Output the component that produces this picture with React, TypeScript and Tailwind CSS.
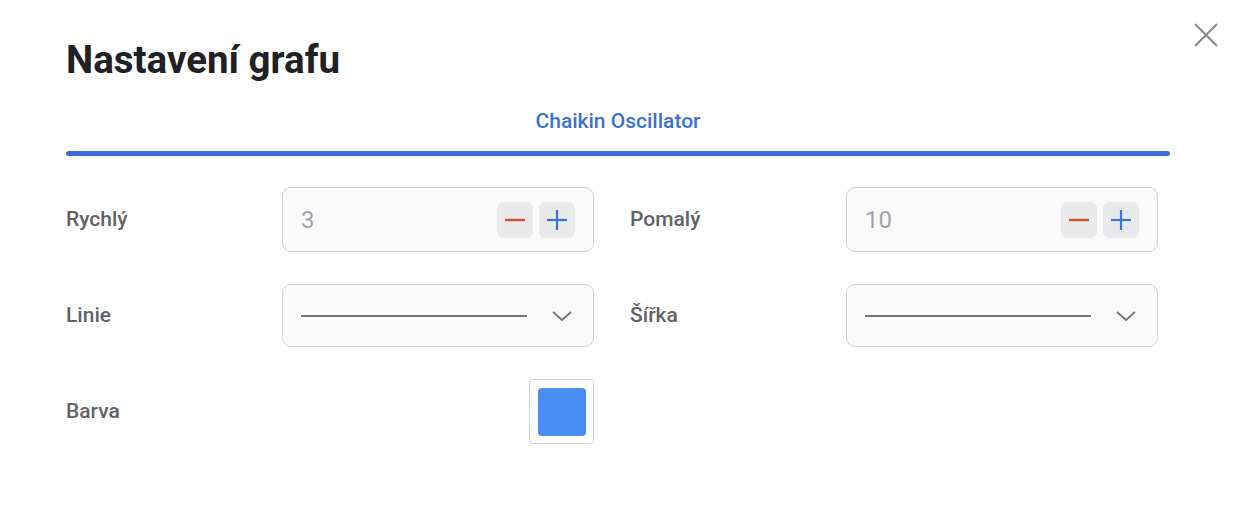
import React from "react";

function Stepper({ value }: { value: string }) {
  return (
    <div className="flex h-[65px] w-[312px] items-center rounded-[9px] border border-[#d2d4d7] bg-[#fafafa] pl-[18px] pr-[18px]">
      <span className="flex-1 text-[24px] text-[#a0a4aa]">{value}</span>
      <div className="flex gap-[6px]">
        <button className="flex h-[36px] w-[36px] items-center justify-center rounded-[6px] bg-[#e8e9eb]">
          <svg width="22" height="22" viewBox="0 0 22 22">
            <line x1="1" y1="11" x2="21" y2="11" stroke="#d0512f" strokeWidth="2.4" />
          </svg>
        </button>
        <button className="flex h-[36px] w-[36px] items-center justify-center rounded-[6px] bg-[#e8e9eb]">
          <svg width="22" height="22" viewBox="0 0 22 22">
            <line x1="1" y1="11" x2="21" y2="11" stroke="#3d72d6" strokeWidth="2.2" />
            <line x1="11" y1="1" x2="11" y2="21" stroke="#3d72d6" strokeWidth="2.2" />
          </svg>
        </button>
      </div>
    </div>
  );
}

function LineSelect() {
  return (
    <div className="flex h-[63px] w-[312px] items-center rounded-[9px] border border-[#d2d4d7] bg-[#fafafa] pl-[18px] pr-[20px]">
      <div className="h-[2px] w-[226px] bg-[#737373]" />
      <div className="flex flex-1 justify-end">
        <svg width="22" height="14" viewBox="0 0 22 14">
          <polyline points="2,3 11,11 20,3" fill="none" stroke="#70757a" strokeWidth="1.8" />
        </svg>
      </div>
    </div>
  );
}

function Label({ children }: { children: React.ReactNode }) {
  return <div className="w-[216px] text-[21px] font-medium text-[#5f6368]">{children}</div>;
}

export default function App() {
  return (
    <div
      className="relative h-[528px] w-[1240px] bg-white"
      style={{ fontFamily: "Roboto, 'Noto Sans', sans-serif" }}
    >
      <button className="absolute right-[21px] top-[22px]">
        <svg width="26" height="26" viewBox="0 0 26 26">
          <line x1="2" y1="2" x2="24" y2="24" stroke="#80868b" strokeWidth="2" />
          <line x1="24" y1="2" x2="2" y2="24" stroke="#80868b" strokeWidth="2" />
        </svg>
      </button>
      <div className="px-[66px] pt-[36px]">
        <h1 className="text-[38.5px] font-bold leading-[48px] text-[#202124]">Nastavení grafu</h1>
        <div className="mt-[24px] w-[1104px]">
          <div className="text-center text-[21px] font-medium leading-[26px] text-[#3c6fd6]">
            Chaikin Oscillator
          </div>
          <div className="mt-[17px] h-[5px] w-full rounded-full bg-[#3c6fd6]" />
        </div>
        <div className="mt-[31px] flex flex-col gap-[32px]">
          <div className="flex items-center">
            <Label>Rychlý</Label>
            <Stepper value="3" />
            <div className="w-[36px]" />
            <Label>Pomalý</Label>
            <Stepper value="10" />
          </div>
          <div className="flex items-center">
            <Label>Linie</Label>
            <LineSelect />
            <div className="w-[36px]" />
            <Label>Šířka</Label>
            <LineSelect />
          </div>
          <div className="flex items-center">
            <Label>Barva</Label>
            <div className="flex w-[312px] justify-end">
              <div className="flex h-[65px] w-[65px] items-center justify-center rounded-[3px] border border-[#d2d4d7] bg-white">
                <div className="h-[48px] w-[48px] rounded-[4px] bg-[#4a8ef5]" />
              </div>
            </div>
          </div>
        </div>
      </div>
    </div>
  );
}
